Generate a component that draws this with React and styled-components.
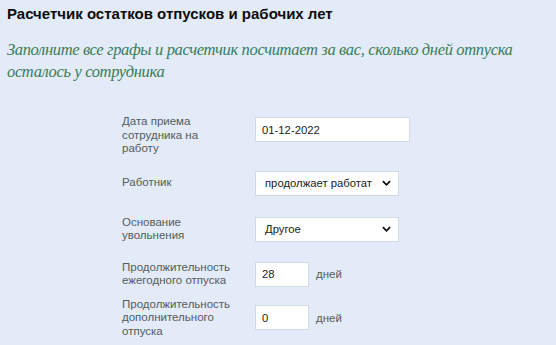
import React from 'react';
import styled, { createGlobalStyle } from 'styled-components';

const GlobalStyle = createGlobalStyle`
  html, body {
    margin: 0;
    padding: 0;
    background: #e2ebf7;
  }
  body {
    font-family: "Liberation Sans", Arial, sans-serif;
  }
`;

const rows = [
  { label: 'Дата приема сотрудника на работу', kind: 'input', value: '01-12-2022', width: 155, top: true },
  { label: 'Работник', kind: 'select', value: 'продолжает работат', space: 15 },
  { label: 'Основание увольнения', kind: 'select', value: 'Другое', space: 20 },
  { label: 'Продолжительность ежегодного отпуска', kind: 'input', value: '28', width: 54, unit: 'дней', space: 18 },
  { label: 'Продолжительность дополнительного отпуска', kind: 'input', value: '0', width: 54, unit: 'дней', space: 10 },
];

const App = () => {
  return (
    <Page>
      <GlobalStyle />
      <Title>Расчетчик остатков отпусков и рабочих лет</Title>
      <Lead>
        Заполните все графы и расчетчик посчитает за вас, сколько дней отпуска
        осталось у сотрудника
      </Lead>
      <Form>
        {rows.map((row, i) => (
          <Row key={i} space={row.space} top={row.top}>
            <Label>{row.label}</Label>
            {row.kind === 'input' ? (
              <Field w={row.width} top={row.top}>{row.value}</Field>
            ) : (
              <Select>
                <span>{row.value}</span>
                <Chevron viewBox="0 0 10 6">
                  <path d="M1 1 L5 5 L9 1" fill="none" stroke="#111" strokeWidth="2" />
                </Chevron>
              </Select>
            )}
            {row.unit && <Unit>{row.unit}</Unit>}
          </Row>
        ))}
      </Form>
    </Page>
  );
};

export default App;

const Page = styled.div`
width:556px;
height:345px;
overflow:hidden;
padding:5px 7px 0;
box-sizing:border-box;
`;

const Title = styled.h1`
margin:0;
font-family:"Liberation Sans", Arial, sans-serif;
font-weight:700;
font-size:15px;
line-height:17px;
color:#0d0d0d;
`;

const Lead = styled.p`
margin:17px 0 0;
font-family:"Liberation Serif", "Times New Roman", serif;
font-style:italic;
font-size:16.5px;
letter-spacing:-0.35px;
line-height:22px;
color:#3a7b59;
`;

const Form = styled.div`
margin:32px 0 0 115px;
display:flex;
flex-direction:column;
`;

const Row = styled.div`
display:flex;
align-items:${props => props.top ? 'flex-start' : 'center'};
margin-top:${props => props.space || 0}px;
`;

const Label = styled.div`
width:110px;
margin-right:23px;
font-size:11.5px;
line-height:13.5px;
color:#555a60;
`;

const Box = styled.div`
height:25px;
box-sizing:border-box;
background:#fff;
border:1px solid #d3d9e2;
display:flex;
align-items:center;
font-size:11.3px;
color:#222;
`;

const Field = styled(Box)`
width:${props => props.w}px;
padding-left:6px;
margin-top:${props => props.top ? 2 : 0}px;
`;

const Select = styled(Box)`
width:144px;
padding:0 7px 0 9px;
justify-content:space-between;
`;

const Chevron = styled.svg`
width:9px;
height:6px;
`;

const Unit = styled.span`
margin-left:7px;
font-size:11.5px;
color:#555a60;
`;
